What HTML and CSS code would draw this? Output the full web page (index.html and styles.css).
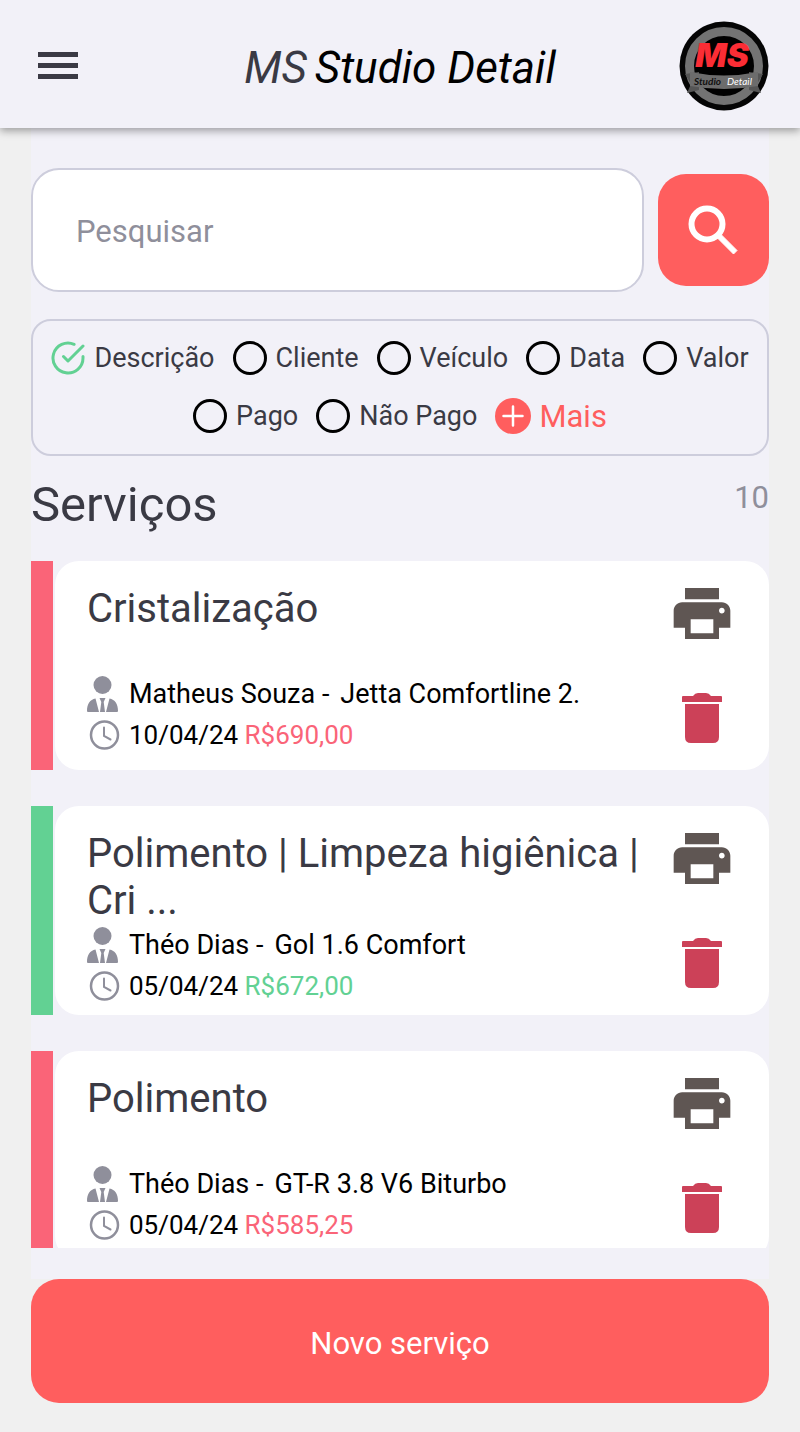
FILE: index.html
```html
<!DOCTYPE html>
<html lang="pt-BR">
<head>
<meta charset="utf-8">
<meta name="viewport" content="width=device-width, initial-scale=1">
<title>MS Studio Detail</title>
<link rel="stylesheet" href="styles.css">
</head>
<body>
<svg class="sprite" aria-hidden="true">
  <symbol id="i-print" viewBox="2 3 20 18"><path d="M19 8H5c-1.660 0-3 1.340-3 3v6h4v4h12v-4h4v-6c0-1.660-1.340-3-3-3zm-3 11H8v-5h8v5zm3-7c-.55 0-1-.45-1-1s.45-1 1-1 1 .45 1 1-.45 1-1 1zm-1-9H6v4h12V3z"/></symbol>
  <symbol id="i-trash" viewBox="0 0 40 50"><path d="M1 3h10q2-3 5-3h8q3 0 5 3h10q1 0 1 1v5H0V4q0-1 1-1zM3 11h34v33q0 6-6 6H9q-6 0-6-6z"/></symbol>
  <symbol id="i-person" viewBox="0 0 31 36"><circle cx="15.500" cy="9" r="9"/><path d="M8.500 22.500L12 36H1q-1 0-1-1c0-7 3-11.500 8.500-12.500zM22.500 22.500L19 36h11q1 0 1-1c0-7-3-11.500-8.500-12.500zM12.500 22h6l-1.800 4L18 36h-5l1.300-10z"/></symbol>
  <symbol id="i-clock" viewBox="0 0 30 30"><g fill="none" stroke="currentColor" stroke-linecap="round"><circle cx="15" cy="15" r="13.500" stroke-width="2.500"/><path d="M14.500 7.500v8.500l6.500 3.500" stroke-width="2"/></g></symbol>
</svg>

<header class="topbar">
  <button class="icon-button" type="button" aria-label="Menu">
    <svg class="menu-icon" viewBox="0 0 40 28"><path d="M0 0h40v5H0zM0 11h40v5H0zM0 22h40v5H0z"/></svg>
  </button>
  <h1 class="brand"><span class="brand-initials">MS</span><span>Studio Detail</span></h1>
  <svg class="logo" viewBox="0 0 90 90" role="img" aria-label="MS Studio Detail">
    <circle cx="45" cy="45" r="44.500" fill="#050505"/>
    <circle cx="45" cy="45" r="34.500" fill="#000" stroke="#737373" stroke-width="9"/>
    <text class="logo-initials" x="43" y="46" text-anchor="middle">MS</text>
    <path d="M6 53l14-2v18L8 72l4-9zM84 53l-14-2v18l12 3-4-9z" fill="#555"/>
    <path d="M11 51q34 7 68 0v14q-34 6-68 0z" fill="#6c6c6c"/>
    <text class="logo-studio" x="15" y="64">Studio</text>
    <text class="logo-detail" x="48" y="64">Detail</text>
  </svg>
</header>

<main class="page">
  <div class="content">
    <form class="search" role="search">
      <input class="search-input" type="search" placeholder="Pesquisar" aria-label="Pesquisar">
      <button class="search-button" type="submit" aria-label="Buscar">
        <svg class="search-icon" viewBox="0 0 50 50"><circle cx="19" cy="19" r="15.500" fill="none" stroke="#fff" stroke-width="6"/><path d="M29.500 33v-3.500H33L49 45.500 45.500 49z" fill="#fff" stroke="#fff"/></svg>
      </button>
    </form>

    <fieldset class="filters" aria-label="Filtrar por">
      <label class="filter"><span class="mark"><input class="radio" type="radio" name="filtro" checked><svg class="tick" viewBox="0 0 24 24"><path d="M22 11.080V12a10 10 0 1 1-5.930-9.140M22 4L12 14.010l-3-3"/></svg></span>Descrição</label>
      <label class="filter"><span class="mark"><input class="radio" type="radio" name="filtro"></span>Cliente</label>
      <label class="filter"><span class="mark"><input class="radio" type="radio" name="filtro"></span>Veículo</label>
      <label class="filter"><span class="mark"><input class="radio" type="radio" name="filtro"></span>Data</label>
      <label class="filter"><span class="mark"><input class="radio" type="radio" name="filtro"></span>Valor</label>
      <label class="filter"><span class="mark"><input class="radio" type="radio" name="filtro"></span>Pago</label>
      <label class="filter"><span class="mark"><input class="radio" type="radio" name="filtro"></span>Não Pago</label>
      <button class="more" type="button"><svg class="more-icon" viewBox="0 0 36 36"><circle cx="18" cy="18" r="18" fill="#ff5e5e"/><path d="M18 8.500v19M8.500 18h19" stroke="#fff" stroke-width="2.500" stroke-linecap="round"/></svg>Mais</button>
    </fieldset>

    <div class="list-head">
      <h2 class="list-title">Serviços</h2>
      <span class="count">10</span>
    </div>

    <div class="list">
      <article class="card unpaid">
        <div class="panel">
          <div class="details">
            <h3 class="service">Cristalização</h3>
            <p class="line"><svg class="person"><use href="#i-person"/></svg><span>Matheus Souza -</span><span>Jetta Comfortline 2.</span></p>
            <p class="line date"><svg class="clock"><use href="#i-clock"/></svg><span>10/04/24 <span class="price">R$690,00</span></span></p>
          </div>
          <div class="actions">
            <button class="icon-button" type="button" aria-label="Imprimir"><svg class="print"><use href="#i-print"/></svg></button>
            <button class="icon-button" type="button" aria-label="Excluir"><svg class="trash"><use href="#i-trash"/></svg></button>
          </div>
        </div>
      </article>
      <article class="card paid">
        <div class="panel">
          <div class="details">
            <h3 class="service">Polimento | Limpeza higiênica | Cri ...</h3>
            <p class="line"><svg class="person"><use href="#i-person"/></svg><span>Théo Dias -</span><span>Gol 1.6 Comfort</span></p>
            <p class="line date"><svg class="clock"><use href="#i-clock"/></svg><span>05/04/24 <span class="price">R$672,00</span></span></p>
          </div>
          <div class="actions">
            <button class="icon-button" type="button" aria-label="Imprimir"><svg class="print"><use href="#i-print"/></svg></button>
            <button class="icon-button" type="button" aria-label="Excluir"><svg class="trash"><use href="#i-trash"/></svg></button>
          </div>
        </div>
      </article>
      <article class="card unpaid">
        <div class="panel">
          <div class="details">
            <h3 class="service">Polimento</h3>
            <p class="line"><svg class="person"><use href="#i-person"/></svg><span>Théo Dias -</span><span>GT-R 3.8 V6 Biturbo</span></p>
            <p class="line date"><svg class="clock"><use href="#i-clock"/></svg><span>05/04/24 <span class="price">R$585,25</span></span></p>
          </div>
          <div class="actions">
            <button class="icon-button" type="button" aria-label="Imprimir"><svg class="print"><use href="#i-print"/></svg></button>
            <button class="icon-button" type="button" aria-label="Excluir"><svg class="trash"><use href="#i-trash"/></svg></button>
          </div>
        </div>
      </article>
    </div>
  </div>

  <button class="new-service" type="button">Novo serviço</button>
</main>
</body>
</html>
```

FILE: styles.css
```css
* {
  box-sizing: border-box;
}

body {
  margin: 0;
  height: 100vh;
  display: flex;
  flex-direction: column;
  background: #f0f0f0;
  color: #3a3a44;
  font-family: Roboto, "Liberation Sans", sans-serif;
}

h1, h2, h3, p {
  margin: 0;
  font-weight: 400;
}

button {
  padding: 0;
  border: 0;
  background: none;
  font: inherit;
  cursor: pointer;
}

svg {
  display: block;
}

.sprite {
  position: absolute;
  width: 0;
  height: 0;
}

.topbar {
  flex: none;
  display: grid;
  grid-template-columns: 1fr auto 1fr;
  align-items: center;
  height: 128px;
  padding: 4px 31px 0;
  background: #f2f1f8;
  box-shadow: 0 3px 8px rgba(0, 0, 0, 0.35);
  z-index: 1;
}

.topbar .icon-button {
  justify-self: start;
  padding: 0 7px;
}

.menu-icon {
  width: 40px;
  height: 28px;
  fill: #3a3a44;
}

.brand {
  display: flex;
  gap: 8px;
  padding-top: 4px;
  color: #000;
  font-size: 44px;
  font-style: italic;
  line-height: 52px;
}

.brand-initials {
  color: #3a3a44;
}

.logo {
  justify-self: end;
  width: 90px;
  height: 90px;
}

.logo-initials {
  fill: #fb2d35;
  font: italic 900 33px Inter, sans-serif;
}

.logo-studio {
  fill: #111;
  font: italic 700 10px Lato, sans-serif;
}

.logo-detail {
  fill: #fff;
  font: italic 400 10px Lato, sans-serif;
}

.page {
  flex: 1;
  min-height: 0;
  display: flex;
  flex-direction: column;
  padding: 0 31px 29px;
}

.content {
  flex: 1;
  min-height: 0;
  display: flex;
  flex-direction: column;
  padding: 40px 0 31px;
  background: #f2f1f8;
}

.search {
  flex: none;
  display: flex;
  align-items: center;
  gap: 14px;
}

.search-input {
  flex: 1;
  min-width: 0;
  height: 124px;
  padding: 2px 43px 0;
  border: 2px solid #cdcddc;
  border-radius: 28px;
  background: #fff;
  color: #3a3a44;
  font: 31px Roboto, sans-serif;
  appearance: none;
}

.search-input::placeholder {
  color: #8f8f9b;
}

.search-button {
  display: grid;
  place-items: center;
  width: 111px;
  height: 112px;
  padding-right: 2px;
  border-radius: 28px;
  background: #ff5e5e;
}

.search-icon {
  width: 50px;
  height: 50px;
}

.filters {
  flex: none;
  display: flex;
  flex-wrap: wrap;
  justify-content: center;
  gap: 20px 18px;
  margin: 27px 0 0;
  padding: 18px 12px 19px;
  border: 2px solid #cdcddc;
  border-radius: 20px;
}

.filter {
  display: flex;
  align-items: center;
  gap: 9px;
  height: 38px;
  font-size: 27px;
}

.mark {
  display: grid;
  width: 34px;
  height: 34px;
}

.radio {
  grid-area: 1 / 1;
  width: 34px;
  height: 34px;
  margin: 0;
  border: 3px solid #000;
  border-radius: 50%;
  appearance: none;
}

.radio:checked {
  border-color: transparent;
}

.tick {
  grid-area: 1 / 1;
  width: 36px;
  height: 36px;
  margin: -1px;
  fill: none;
  stroke: #62d193;
  stroke-width: 2;
  stroke-linecap: round;
  stroke-linejoin: round;
}

.more {
  display: flex;
  align-items: center;
  gap: 8px;
  height: 38px;
  color: #ff5e5e;
  font-size: 31px;
}

.more-icon {
  width: 36px;
  height: 36px;
}

.list-head {
  flex: none;
  display: flex;
  justify-content: space-between;
  height: 105px;
  padding-top: 20px;
}

.list-title {
  font-size: 49px;
  line-height: 58px;
}

.count {
  color: #8f8f9b;
  font-size: 31px;
  line-height: 44px;
}

.list {
  flex: 1;
  min-height: 0;
  display: flex;
  flex-direction: column;
  gap: 36px;
  overflow: hidden;
}

.card {
  flex: none;
  min-height: 209px;
  display: flex;
  border-left: 22px solid;
}

.unpaid {
  border-color: #fa6478;
}

.paid {
  border-color: #62d193;
}

.panel {
  flex: 1;
  display: flex;
  justify-content: space-between;
  padding: 24px 38px 0 32px;
  margin-left: 2px;
  border-radius: 24px;
  background: #fff;
}

.details {
  flex: 1;
  min-width: 0;
}

.service {
  min-height: 88px;
  font-size: 40px;
  line-height: 47px;
}

.line {
  display: flex;
  align-items: center;
  gap: 11px;
  height: 41px;
  color: #000;
  font-size: 27px;
}

.date {
  gap: 9px;
  padding-left: 2px;
  font-size: 26px;
}

.person {
  width: 31px;
  height: 36px;
  fill: #8f8f9b;
}

.clock {
  width: 31px;
  height: 30px;
  color: #8f8f9b;
}

.unpaid .price {
  color: #fa6478;
}

.paid .price {
  color: #62d193;
}

.actions {
  flex: none;
  display: flex;
  flex-direction: column;
  align-items: center;
  gap: 54px;
  padding-top: 3px;
}

.print {
  width: 58px;
  height: 51px;
  fill: #5f5653;
}

.trash {
  width: 40px;
  height: 50px;
  fill: #cc4158;
}

.new-service {
  flex: none;
  height: 124px;
  padding-top: 4px;
  border-radius: 28px;
  background: #ff5e5e;
  color: #fff;
  font-size: 31px;
}
```
